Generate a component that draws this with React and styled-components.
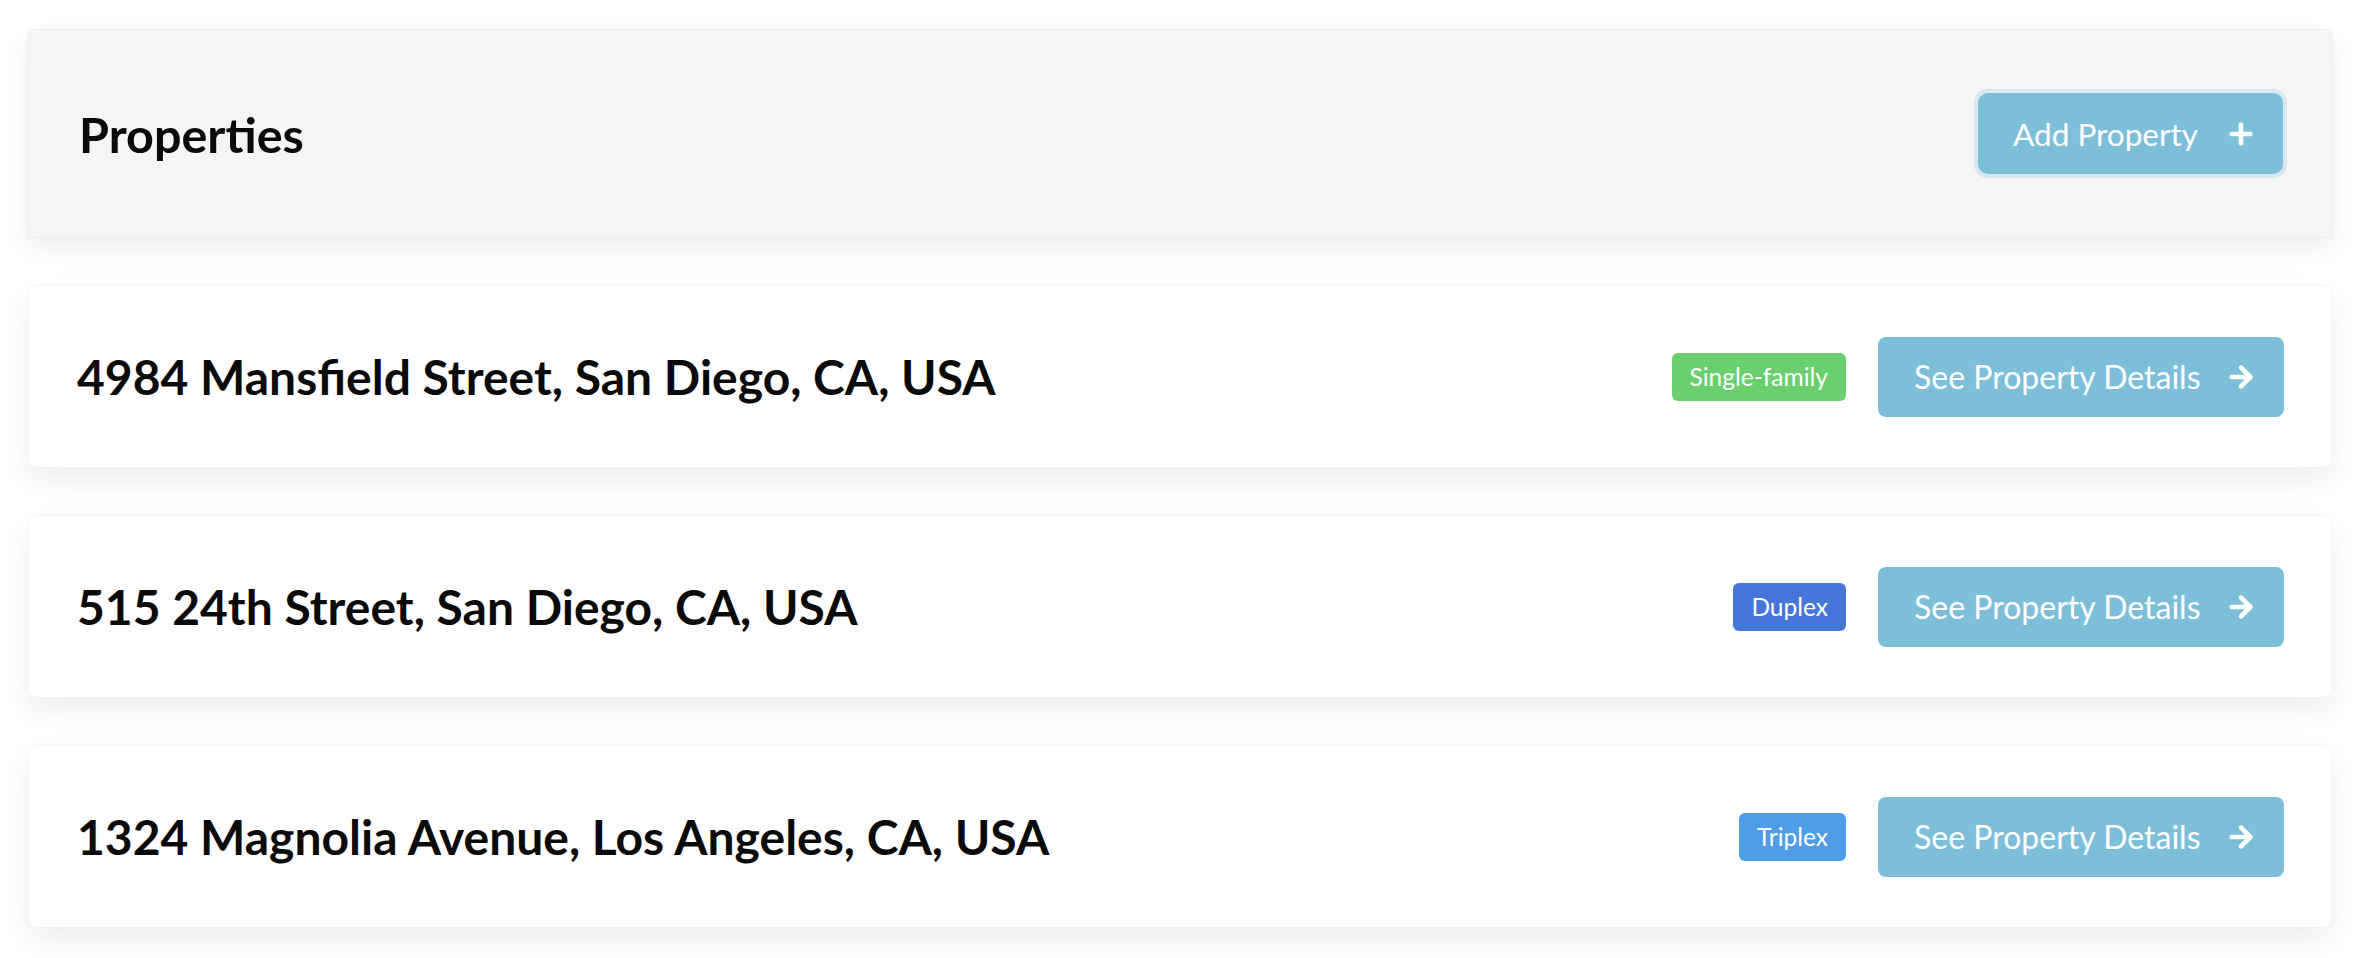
import React from "react";
import styled, { createGlobalStyle } from "styled-components";
import { Plus, ArrowRight } from "lucide-react";

const Global = createGlobalStyle`
  html, body { margin: 0; padding: 0; background: #ffffff; }
  body { font-family: "Lato", "Noto Sans", sans-serif; color: #0a0a0a; }
  * { box-sizing: border-box; }
`;

const Page = styled.div`
  display: flex;
  flex-direction: column;
  gap: 47px;
  padding: 29px 35px 30px 27px;
`;

const HeaderCard = styled.header`
  height: 209px;
  display: flex;
  align-items: center;
  justify-content: space-between;
  padding: 0 49px 0 51px;
  background: #f5f5f5;
  border: 1px solid #efefef;
  border-radius: 8px 8px 3px 3px;
  box-shadow: 0 10px 28px rgba(0, 0, 0, 0.07);
`;

const PageTitle = styled.h1`
  margin: 0;
  font-size: 48.5px;
  font-weight: 700;
  letter-spacing: 0;
`;

const AddButton = styled.button`
  height: 81px;
  display: flex;
  align-items: center;
  gap: 27px;
  padding: 0 26px 0 35px;
  background: #7dbfd9;
  color: #ffffff;
  border: none;
  border-radius: 10px;
  box-shadow: 0 0 0 4px #d7e8ef;
  font-family: inherit;
  font-size: 31.5px;
  font-weight: 400;
  cursor: pointer;
`;

const PropertyCard = styled.article`
  height: 183px;
  margin-left: 1px;
  margin-right: 1px;
  display: flex;
  align-items: center;
  justify-content: space-between;
  padding: 0 47px 0 48px;
  background: #ffffff;
  border: 1px solid #f3f3f3;
  border-radius: 8px;
  box-shadow: 0 12px 30px rgba(0, 0, 0, 0.07);
`;

const Address = styled.h2`
  margin: 0;
  font-size: 48px;
  font-weight: 700;
`;

const Actions = styled.div`
  display: flex;
  align-items: center;
  gap: 32px;
`;

const Badge = styled.span`
  height: 48px;
  display: inline-flex;
  align-items: center;
  padding: 0 18px;
  border-radius: 6px;
  background: ${(p) => p.$color};
  color: #ffffff;
  font-size: 24.5px;
`;

const DetailsButton = styled.button`
  width: 406px;
  height: 80px;
  display: flex;
  align-items: center;
  justify-content: space-between;
  padding: 0 27px 0 36px;
  background: #7dbfd9;
  color: #ffffff;
  border: none;
  border-radius: 8px;
  font-family: inherit;
  font-size: 32px;
  font-weight: 400;
  cursor: pointer;
`;

const properties = [
  { address: "4984 Mansfield Street, San Diego, CA, USA", type: "Single-family", color: "#6acf6e" },
  { address: "515 24th Street, San Diego, CA, USA", type: "Duplex", color: "#4576d8" },
  { address: "1324 Magnolia Avenue, Los Angeles, CA, USA", type: "Triplex", color: "#4f9de8" },
];

export default function App() {
  return (
    <>
      <Global />
      <Page>
        <HeaderCard>
          <PageTitle>Properties</PageTitle>
          <AddButton>
            Add Property
            <Plus size={32} strokeWidth={3.5} />
          </AddButton>
        </HeaderCard>
        {properties.map((p) => (
          <PropertyCard key={p.address}>
            <Address>{p.address}</Address>
            <Actions>
              <Badge $color={p.color}>{p.type}</Badge>
              <DetailsButton>
                See Property Details
                <ArrowRight size={32} strokeWidth={3.5} />
              </DetailsButton>
            </Actions>
          </PropertyCard>
        ))}
      </Page>
    </>
  );
}
